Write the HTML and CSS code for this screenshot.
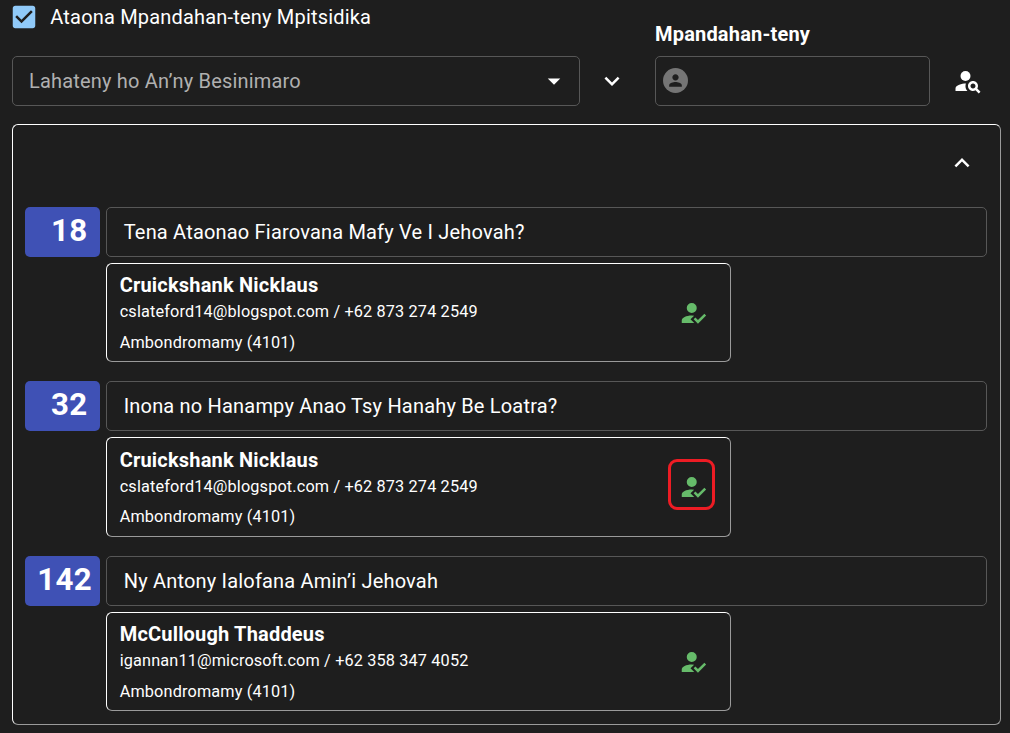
FILE: index.html
```html
<!DOCTYPE html>
<html lang="mg">
<head>
<meta charset="utf-8">
<title>Mpandahan-teny Mpitsidika</title>
<link rel="stylesheet" href="styles.css">
</head>
<body>
<svg class="defs" aria-hidden="true">
  <symbol id="account-check" viewBox="0 0 24 24"><path d="M21.1,12.5L22.5,13.91L15.97,20.5L12.5,17L13.9,15.59L15.97,17.67L21.1,12.5M10,17L13,20H3V18C3,15.79 6.58,14 11,14L12.89,14.11L10,17M11,4A4,4 0 0,1 15,8A4,4 0 0,1 11,12A4,4 0 0,1 7,8A4,4 0 0,1 11,4Z"/></symbol>
</svg>
<main class="page">
  <header class="filters">
    <div class="talk-filter">
      <label class="check"><svg class="icon check-icon" viewBox="0 0 24 24"><path d="M19 3H5c-1.11 0-2 .9-2 2v14c0 1.1.89 2 2 2h14c1.11 0 2-.9 2-2V5c0-1.1-.89-2-2-2zm-9 14l-5-5 1.41-1.41L10 14.17l7.59-7.59L19 8l-9 9z"/></svg><span class="check-text">Ataona Mpandahan-teny Mpitsidika</span></label>
      <div class="field select"><span class="placeholder">Lahateny ho An’ny Besinimaro</span><svg class="icon" viewBox="0 0 24 24"><path d="M7 10l5 5 5-5z"/></svg></div>
    </div>
    <svg class="icon expand" viewBox="0 0 24 24"><path d="M16.59 8.59 12 13.17 7.41 8.59 6 10l6 6 6-6z"/></svg>
    <div class="speaker-filter">
      <span class="speaker-label">Mpandahan-teny</span>
      <div class="field speaker"><span class="avatar"><svg class="avatar-icon" viewBox="0 0 24 24"><path d="M12 12c2.21 0 4-1.79 4-4s-1.79-4-4-4-4 1.79-4 4 1.79 4 4 4zm0 2c-2.67 0-8 1.34-8 4v2h16v-2c0-2.66-5.33-4-8-4z"/></svg></span></div>
    </div>
    <svg class="icon search" viewBox="0 0 24 24"><circle cx="10" cy="8" r="4"/><path d="M10.35 14.01C7.62 13.91 2 15.27 2 18v2h9.54C9.07 17.24 10.31 14.11 10.35 14.01zM19.43 18.02C19.79 17.43 20 16.74 20 16c0-2.21-1.79-4-4-4s-4 1.79-4 4 1.79 4 4 4c.74 0 1.43-.22 2.02-.57L20.59 22 22 20.59 19.43 18.02zM16 18c-1.1 0-2-.9-2-2s.9-2 2-2 2 .9 2 2S17.1 18 16 18z"/></svg>
  </header>
  <section class="panel">
    <div class="panel-head"><svg class="icon" viewBox="0 0 24 24"><path d="m12 8-6 6 1.41 1.41L12 10.83l4.59 4.58L18 14z"/></svg></div>
    <div class="talks">
      <article class="talk">
        <div class="number">18</div>
        <div class="field title">Tena Ataonao Fiarovana Mafy Ve I Jehovah?</div>
        <div class="card">
          <div class="person"><div class="name">Cruickshank Nicklaus</div><div class="contact">cslateford14@blogspot.com / +62 873 274 2549</div><div class="place">Ambondromamy (4101)</div></div>
          <div class="confirm"><svg class="icon"><use href="#account-check"/></svg></div>
        </div>
      </article>
      <article class="talk">
        <div class="number">32</div>
        <div class="field title">Inona no Hanampy Anao Tsy Hanahy Be Loatra?</div>
        <div class="card tall">
          <div class="person"><div class="name">Cruickshank Nicklaus</div><div class="contact">cslateford14@blogspot.com / +62 873 274 2549</div><div class="place">Ambondromamy (4101)</div></div>
          <div class="confirm"><svg class="icon"><use href="#account-check"/></svg><span class="marker"></span></div>
        </div>
      </article>
      <article class="talk">
        <div class="number wide">142</div>
        <div class="field title">Ny Antony Ialofana Amin’i Jehovah</div>
        <div class="card">
          <div class="person"><div class="name">McCullough Thaddeus</div><div class="contact">igannan11@microsoft.com / +62 358 347 4052</div><div class="place">Ambondromamy (4101)</div></div>
          <div class="confirm"><svg class="icon"><use href="#account-check"/></svg></div>
        </div>
      </article>
    </div>
  </section>
</main>
</body>
</html>
```
FILE: styles.css
```css
* { box-sizing: border-box; }
body {
  margin: 0;
  height: 733px;
  overflow: hidden;
  background: #1e1e1e;
  color: #fff;
  font-family: Roboto, sans-serif;
  font-size: 20px;
  line-height: 30px;
  letter-spacing: 0.1875px;
}
.defs { display: block; width: 0; height: 0; }
.icon { display: block; flex: none; width: 30px; height: 30px; fill: currentColor; }
.page { padding: 2px 9px 0 12px; }
.filters { display: flex; align-items: flex-end; height: 104px; }
.talk-filter { display: flex; flex-direction: column; gap: 24px; width: 568px; }
.check { display: flex; align-items: center; height: 30px; margin-left: -3.4px; }
.check-icon { color: #90caf9; }
.check-text { margin-left: 11.7px; }
.field {
  display: flex;
  align-items: center;
  height: 50px;
  border: 1px solid #575757;
  border-radius: 5px;
}
.select { justify-content: space-between; padding: 0 10px 0 16px; }
.placeholder { color: #b0b0b0; }
.expand { margin: 0 28px 10px 17px; }
.speaker-filter { display: flex; flex-direction: column; gap: 7px; width: 275px; }
.speaker-label { font-weight: 700; }
.speaker { padding: 0 0 1px 7px; }
.avatar {
  display: flex;
  align-items: center;
  justify-content: center;
  width: 25px;
  height: 25px;
  border-radius: 50%;
  background: #757575;
  color: #1e1e1e;
}
.avatar-icon { width: 19px; height: 19px; fill: currentColor; }
.search { margin: 0 0 10px 22.5px; }
.panel {
  height: 601px;
  margin-top: 18px;
  padding: 23px 13px 0 12px;
  border: 1px solid;
  border-color: #fff #9a9a9a #9a9a9a #fff;
  border-radius: 6px;
}
.panel-head { display: flex; justify-content: flex-end; height: 59px; padding-right: 10px; }
.talks { display: grid; grid-template-rows: 155px 156px 155px; row-gap: 19px; }
.talk {
  display: grid;
  grid-template: 50px 1fr / 75px 1fr;
  gap: 6px;
}
.number {
  height: 50px;
  padding-right: 12.6px;
  border-radius: 5px;
  background: #3f51b5;
  font-size: 31.25px;
  font-weight: 700;
  line-height: 47px;
  letter-spacing: 0.3px;
  text-align: right;
}
.wide { padding-right: 8px; }
.title { padding-left: 16.7px; }
.card {
  grid-column: 2;
  display: flex;
  justify-content: space-between;
  width: 625px;
  padding: 0 22px 0 12.7px;
  border: 1px solid;
  border-color: #fff #9a9a9a #9a9a9a #fff;
  border-radius: 6px;
}
.person { padding-top: 6px; font-size: 16.25px; line-height: 24px; letter-spacing: 0.15px; }
.name { font-size: 20px; font-weight: 700; line-height: 30px; letter-spacing: 0.1875px; }
.place { margin-top: 7px; }
.tall .person { padding-top: 7px; }
.tall .place { margin-top: 6px; }
.confirm { position: relative; display: flex; align-items: center; color: #66bb6a; }
.marker {
  position: absolute;
  left: -10px;
  top: 21px;
  width: 47px;
  height: 51px;
  border: 3px solid #ed1c24;
  border-radius: 9px;
}
```
